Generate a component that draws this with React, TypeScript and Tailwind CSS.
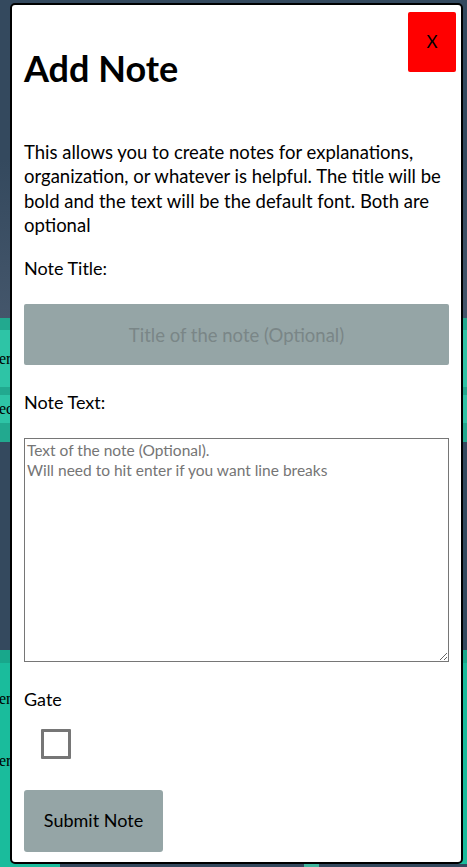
import React from "react";

export default function App() {
  return (
    <div className="relative w-[467px] h-[867px] overflow-hidden bg-[#34495e]" style={{ fontFamily: "Lato, sans-serif" }}>
      {/* background page */}
      <div className="flex flex-col w-full h-full" style={{ fontFamily: '"Liberation Serif", serif' }}>
        <div className="h-[318px] bg-gradient-to-b from-[#34495e] via-[#34495e] to-[#44566b]" />
        <div className="h-[12px] bg-[#22a98f]" />
        <div className="h-[57px] bg-[#2ec4a6] text-[16px] text-black flex items-center -ml-[1px]">er</div>
        <div className="h-[8px] bg-[#22a98f]" />
        <div className="h-[28px] bg-[#2ec4a6] text-[16px] text-black flex items-center -ml-[1px]">ec</div>
        <div className="h-[19px] bg-[#22a98f]" />
        <div className="h-[208px] bg-[#34495e]" />
        <div className="h-[13px] bg-[#18a78b]" />
        <div className="flex-1 bg-[#1abc9c] text-[16px] text-black flex flex-col -ml-[1px]">
          <div className="h-[48px] flex items-end">en</div>
          <div className="h-[62px] flex items-end">er</div>
          <div className="flex-1" />
          <div className="h-[3px] flex">
            <div className="w-[61px] bg-[#1abc9c]" />
            <div className="w-[244px] bg-[#34495e]" />
            <div className="w-[15px] bg-[#3fb59d]" />
            <div className="flex-1 bg-[#34495e]" />
          </div>
        </div>
      </div>

      {/* modal */}
      <div className="absolute left-[10px] top-[3px] w-[453px] h-[861px] bg-white border-2 border-black rounded-[5px] px-3 text-black">
        <button className="absolute top-[7px] right-[5px] w-[48px] h-[60px] bg-[#ff0000] rounded-[2px] text-[17px] text-black flex items-center justify-center">
          X
        </button>
        <h1 className="mt-[41px] text-[36px] font-bold leading-[44px]">Add Note</h1>
        <p className="mt-[50px] text-[18.5px] leading-[24.4px]">
          This allows you to create notes for explanations,
          <br />
          organization, or whatever is helpful. The title will be
          <br />
          bold and the text will be the default font. Both are
          <br />
          optional
        </p>
        <div className="mt-[18px] text-[18px] leading-[24.4px]">Note Title:</div>
        <input
          className="mt-[24px] block w-full h-[61px] bg-[#95a5a6] rounded-[2px] text-center text-[18.5px] outline-none placeholder:text-[#7a8687]"
          placeholder="Title of the note (Optional)"
        />
        <div className="mt-[25px] text-[18px] leading-[24.4px]">Note Text:</div>
        <textarea
          className="mt-[24px] block w-full h-[224px] border border-[#767676] p-[2px] text-[15.5px] leading-[19.5px] outline-none placeholder:text-[#757575]"
          placeholder={"Text of the note (Optional).\nWill need to hit enter if you want line breaks"}
        />
        <div className="mt-[25px] text-[18px] leading-[24.4px]">Gate</div>
        <input
          type="checkbox"
          className="mt-[17px] ml-[17px] block appearance-none w-[30px] h-[30px] border-[3px] border-[#767676] rounded-[1px] bg-white"
        />
        <button className="mt-[31px] block w-[139px] h-[62px] bg-[#95a5a6] rounded-[3px] text-[18px] text-black">
          Submit Note
        </button>
      </div>
    </div>
  );
}
